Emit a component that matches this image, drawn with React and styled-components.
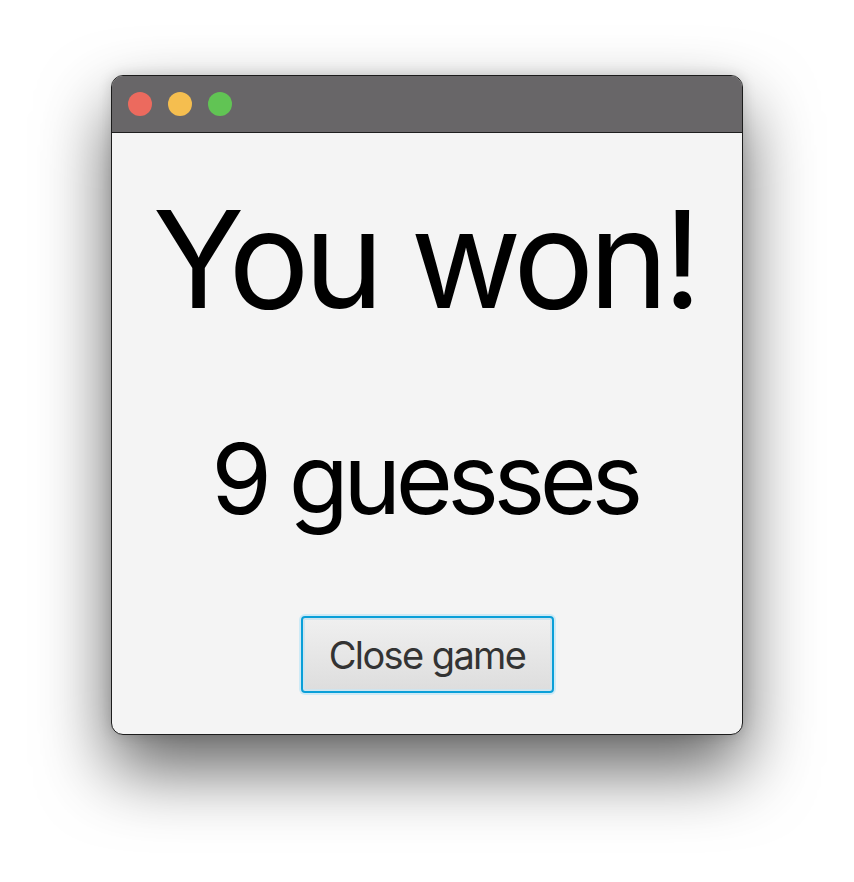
import styled, { createGlobalStyle } from 'styled-components'

const Global = createGlobalStyle`
	html, body {
		margin: 0;
		padding: 0;
		background: #ffffff;
		font-family: Inter, 'Noto Sans', sans-serif;
	}
`

const Stage = styled.div`
	width: 854px;
	height: 882px;
	padding: 75px 0 0 111px;
	box-sizing: border-box;
`

const Window = styled.div`
	width: 632px;
	height: 660px;
	box-sizing: border-box;
	border: 1px solid #1c1c1c;
	border-radius: 12px;
	overflow: hidden;
	background: #f4f4f4;
	display: flex;
	flex-direction: column;
	box-shadow: 0 34px 70px rgba(0, 0, 0, 0.62), 0 0 14px rgba(0, 0, 0, 0.15);
`

const TitleBar = styled.div`
	height: 56px;
	flex: none;
	background: #686668;
	border-bottom: 1px solid #1e1e1e;
	display: flex;
	align-items: center;
	gap: 16px;
	padding-left: 16px;
`

const Light = styled.span`
	width: 24px;
	height: 24px;
	border-radius: 50%;
	background: ${(p) => p.color};
`

const Body = styled.div`
	flex: 1;
	display: flex;
	flex-direction: column;
	align-items: center;
`

const Headline = styled.div`
	margin-top: 59px;
	margin-right: 5px;
	font-size: 135px;
	line-height: 1;
	color: #000;
	letter-spacing: -5.5px;
`

const Count = styled.div`
	margin-top: 103px;
	margin-right: 5px;
	font-size: 98px;
	line-height: 1;
	color: #000;
	letter-spacing: -5.5px;
`

const Button = styled.button`
	margin-top: 88px;
	width: 253px;
	height: 77px;
	box-sizing: border-box;
	border: 2px solid #0a9fd8;
	border-radius: 4px;
	background: linear-gradient(#f0f0f0, #dddddd);
	box-shadow: inset 0 0 0 2px #cfe4ee, 0 0 0 2px #cdeaf6;
	font-family: Inter, 'Noto Sans', sans-serif;
	font-size: 38px;
	color: #333;
	letter-spacing: -1.6px;
	padding: 0;
`

export default function App() {
	return (
		<Stage>
			<Global />
			<Window>
				<TitleBar>
					<Light color='#ec6a5e' />
					<Light color='#f5be4f' />
					<Light color='#61c454' />
				</TitleBar>
				<Body>
					<Headline>You won!</Headline>
					<Count>9 guesses</Count>
					<Button>Close game</Button>
				</Body>
			</Window>
		</Stage>
	)
}
